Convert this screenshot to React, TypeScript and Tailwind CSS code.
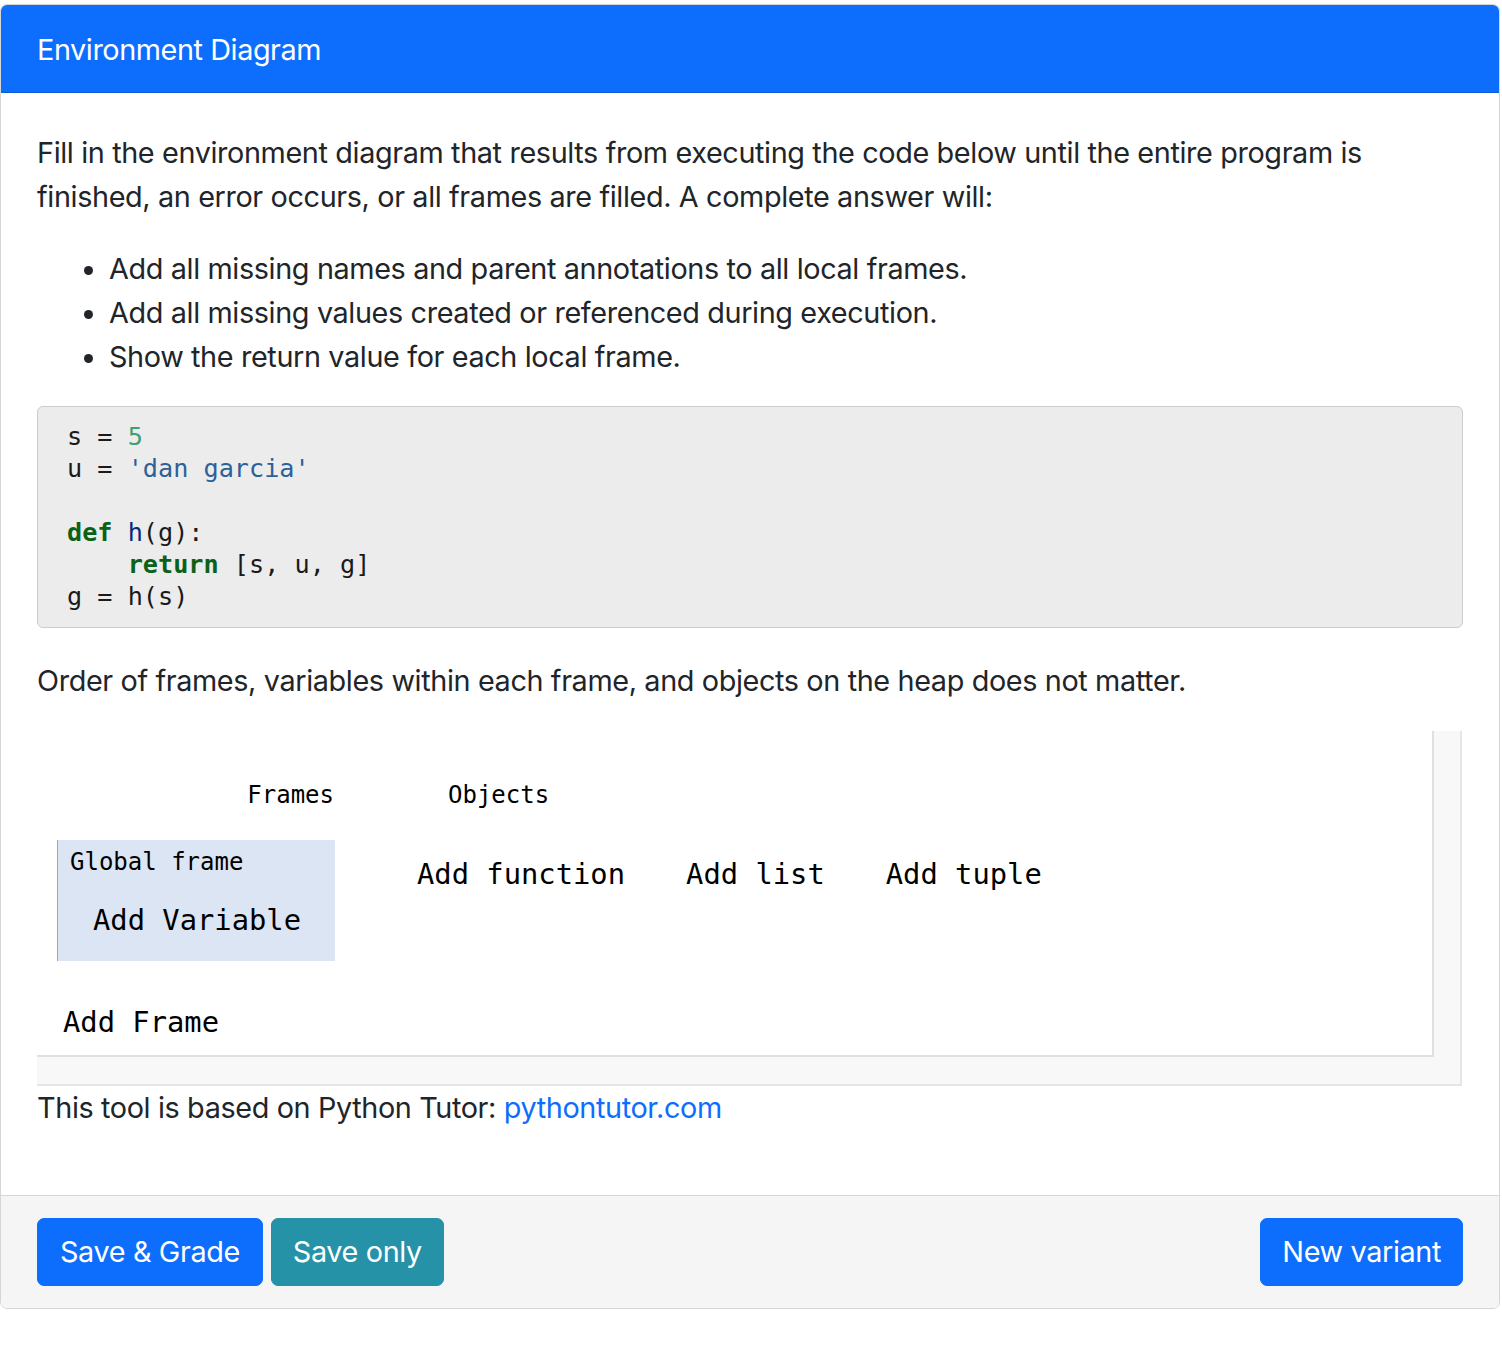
import React from "react";

const mono = "font-['DejaVu_Sans_Mono',monospace]";

export default function App() {
  return (
    <div className="bg-white min-h-[1352px] pt-[4px] font-['Inter',sans-serif] text-[#212529] tracking-[-0.37px]">
      <div className="w-[1500px] border border-[#d6d6d6] rounded-[7px] overflow-hidden bg-white">
        <div className="bg-[#0d6efd] text-white text-[28.8px] leading-[44px] px-[36px] pt-[23px] pb-[20px] border-b border-[#0b5ed7] tracking-[-0.42px]">
          Environment Diagram
        </div>
        <div className="px-[36px] pt-[38px] pb-[36px] text-[28.8px] leading-[44px]">
          <p className="mb-[27.8px]">
            Fill in the environment diagram that results from executing the code below until the entire program is
            finished, an error occurs, or all frames are filled. A complete answer will:
          </p>
          <ul className="list-disc pl-[72px] mb-[27px]">
            <li>Add all missing names and parent annotations to all local frames.</li>
            <li>Add all missing values created or referenced during execution.</li>
            <li>Show the return value for each local frame.</li>
          </ul>
          <pre
            className={`${mono} tracking-normal bg-[#ececec] border border-[#cccccc] rounded-[6px] px-[29px] py-[14px] text-[25.2px] leading-[32px] text-[#1a1a1a] mb-[31px]`}
          >
            <div>
              s = <span className="text-[#40a070]">5</span>
            </div>
            <div>
              u = <span className="text-[#2f5f97]">'dan garcia'</span>
            </div>
            <div>&nbsp;</div>
            <div>
              <span className="text-[#0b6118] font-bold">def</span> <span className="text-[#06287e]">h</span>(g):
            </div>
            <div>
              {"    "}
              <span className="text-[#0b6118] font-bold">return</span> [s, u, g]
            </div>
            <div>g = h(s)</div>
          </pre>
          <p className="mb-[28px]">
            Order of frames, variables within each frame, and objects on the heap does not matter.
          </p>

          <div className="w-[1425px] h-[355px] bg-[#f8f8f8] border-r-2 border-b-2 border-[#e6e6e6]">
            <div className={`${mono} tracking-normal w-[1397px] h-[326px] bg-white border-r-2 border-b-2 border-[#e0e0e0] pl-[20px] pt-[50px] text-black`}>
              <div className="flex">
                <div className="w-[278px] flex flex-col">
                  <div className="text-right text-[24px] leading-[28px] pr-[1px]">Frames</div>
                  <div className="mt-[31px] h-[121px] bg-[#dce5f3] border-l border-[#a0a8b0] pl-[12px] pt-[8px]">
                    <div className="text-[24px] leading-[28px]">Global frame</div>
                    <div className="mt-[26px] pl-[23px] text-[28.8px] leading-[36px]">Add Variable</div>
                  </div>
                  <div className="mt-[43px] pl-[6px] text-[28.8px] leading-[36px]">Add Frame</div>
                </div>
                <div className="flex flex-col">
                  <div className="pl-[113px] text-[24px] leading-[28px]">Objects</div>
                  <div className="mt-[47px] pl-[82px] flex gap-[61px] text-[28.8px] leading-[36px]">
                    <span>Add function</span>
                    <span>Add list</span>
                    <span>Add tuple</span>
                  </div>
                </div>
              </div>
            </div>
          </div>
          <p className="mb-[28.8px]">
            This tool is based on Python Tutor: <span className="text-[#0d6efd]">pythontutor.com</span>
          </p>
        </div>
        <div className="bg-[#f5f5f5] border-t border-[#d6d6d6] px-[36px] py-[22px] flex items-center text-[28.8px] leading-[44px]">
          <button className="bg-[#0d6efd] text-white rounded-[7px] px-[22px] py-[11px] border border-[#0d6efd]">
            Save &amp; Grade
          </button>
          <button className="ml-[8px] bg-[#2692a8] text-white rounded-[7px] px-[21px] py-[11px] border border-[#2692a8]">
            Save only
          </button>
          <button className="ml-auto bg-[#0d6efd] text-white rounded-[7px] px-[21px] py-[11px] border border-[#0d6efd]">
            New variant
          </button>
        </div>
      </div>
    </div>
  );
}
